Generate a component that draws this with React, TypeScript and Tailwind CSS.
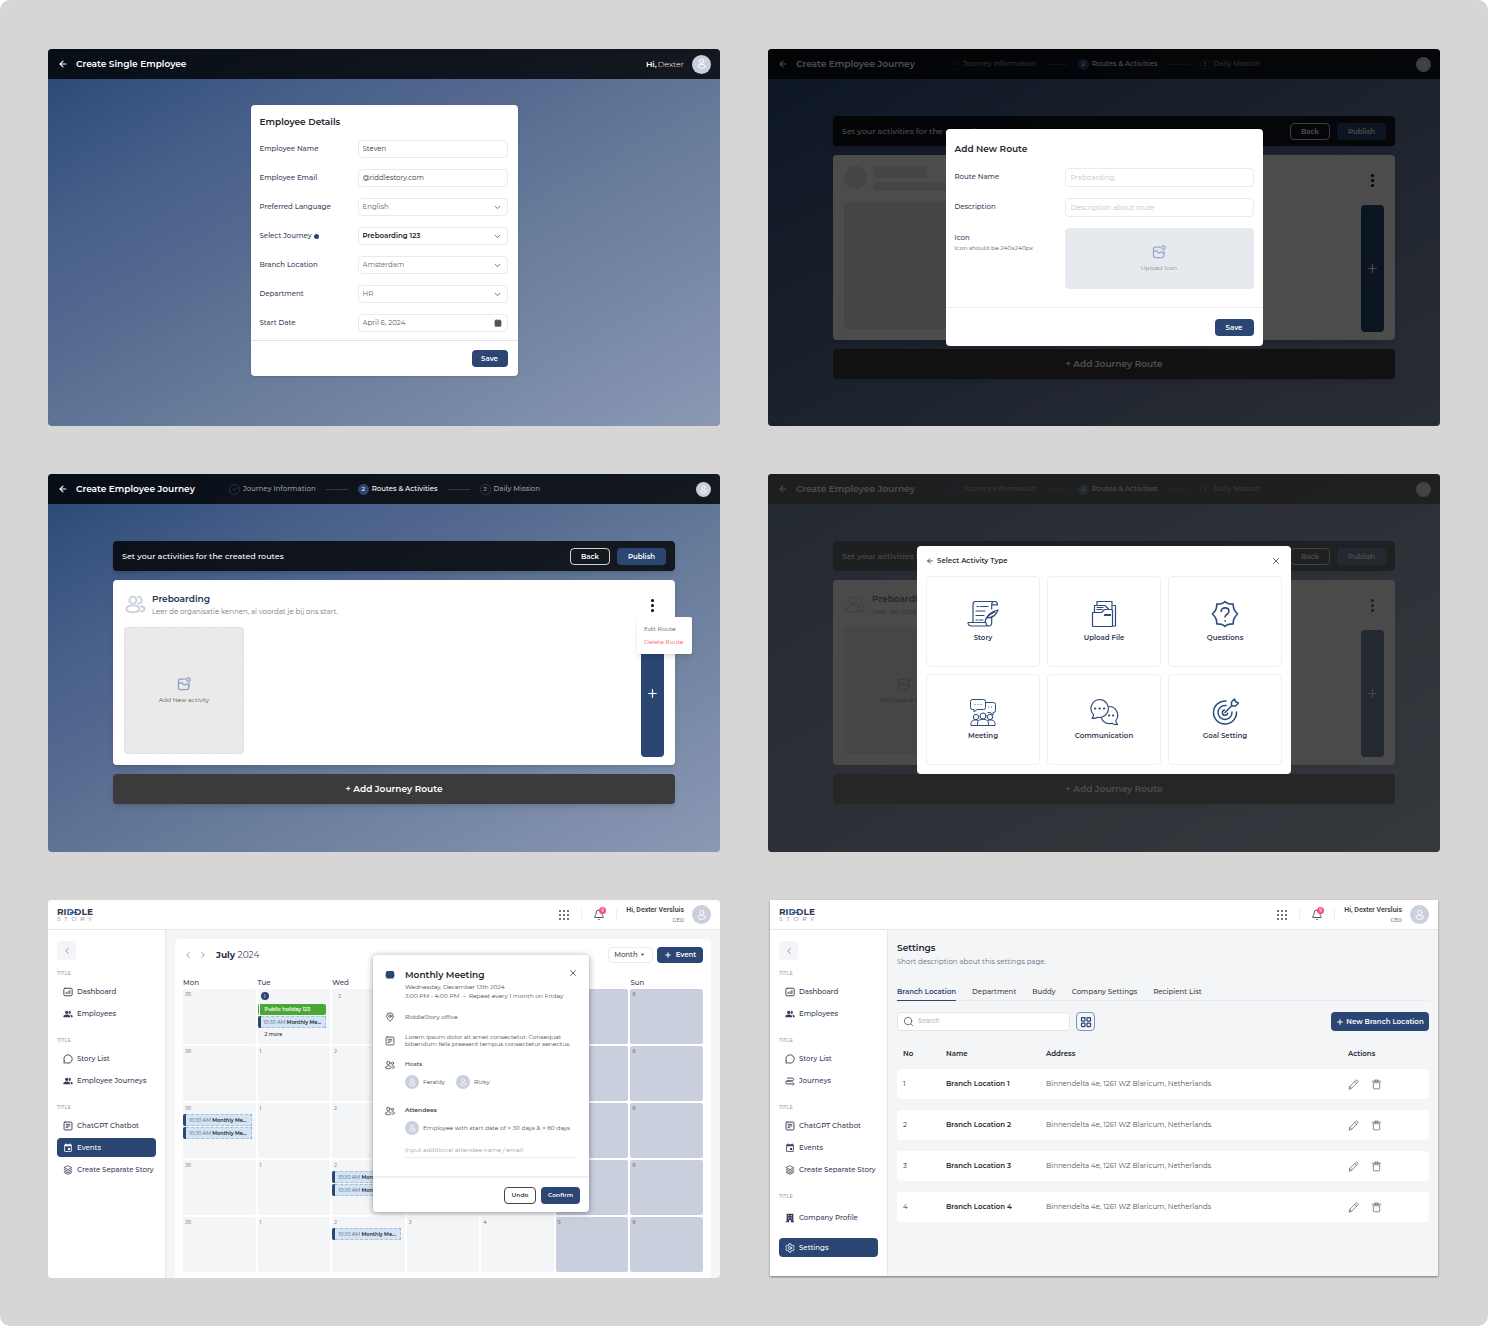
import React from "react";
import { ArrowLeft, Bell, Calendar, Check, ChevronDown, ChevronLeft, ChevronRight, LayoutGrid, MapPin, MessageCircle, Plus, Search, X } from "lucide-react";
import { MdPeopleAlt, MdEvent, MdArrowDropDown } from "react-icons/md";

type IconProps = { className?: string; strokeWidth?: number };

function Svg({ className, strokeWidth = 1.5, box = "0 0 24 24", children }: IconProps & { box?: string; children: React.ReactNode }) {
  return (
    <svg viewBox={box} className={className} fill="none" stroke="currentColor" strokeWidth={strokeWidth} strokeLinecap="round" strokeLinejoin="round" aria-hidden="true">
      {children}
    </svg>
  );
}

/* ---------- icons ---------- */

const UserIcon = (p: IconProps) => (
  <Svg {...p}>
    <circle cx="12" cy="7" r="4.5" />
    <ellipse cx="12" cy="17.5" rx="8" ry="4.2" />
  </Svg>
);

const UsersIcon = (p: IconProps) => (
  <Svg {...p}>
    <circle cx="9" cy="7" r="4" />
    <path d="M15 11a4 4 0 0 0 0-8" />
    <ellipse cx="9" cy="17" rx="7.5" ry="4" />
    <path d="M18.5 14c2 .4 3.8 1.5 3.8 3s-1.5 2.500-3.800 3" />
  </Svg>
);

const HostsIcon = (p: IconProps) => (
  <Svg {...p}>
    <circle cx="8" cy="7" r="4" />
    <circle cx="18" cy="8" r="2.6" />
    <path d="M1.500 18c0-3 3-4 6.500-4s6.500 1 6.500 4-2 3-6.500 3-6.500 0-6.500-3Z" />
    <path d="M17 14c3.500-.3 5.500 1 5.500 3s-1.500 2.500-4.500 2.500" />
  </Svg>
);

const ImageAddIcon = (p: IconProps) => (
  <Svg {...p}>
    <path d="M14 3.500H6A3.500 3.500 0 0 0 2.500 7v11A3.500 3.500 0 0 0 6 21.500h11a3.500 3.500 0 0 0 3.500-3.500v-8" />
    <circle cx="19.500" cy="4.500" r="3" />
    <path d="m3 12 2.500-2c1.200-1 2.500-.6 3.500.6l2 2.500c.7.900 1.800 1 2.600.2l1-1c1-1 2.400-.8 3.200.2l2.500 3" />
  </Svg>
);

const DashboardIcon = (p: IconProps) => (
  <Svg {...p}>
    <rect x="2" y="3" width="20" height="18" rx="3" />
    <path d="M7.500 16v-3M12 16v-5M16.500 16V8" />
  </Svg>
);

const NoteIcon = (p: IconProps) => (
  <Svg {...p}>
    <rect x="2.500" y="2.500" width="19" height="19" rx="2.500" />
    <path d="M7.500 8h9M7.500 12h9M7.500 16h4" />
  </Svg>
);

const StackIcon = (p: IconProps) => (
  <Svg {...p}>
    <path d="m12 2 9 4.500-9 4.500-9-4.500Z" />
    <path d="m3 10.500 9 4.500 9-4.500M3 14.500l9 4.500 9-4.500M3 18l9 4.500 9-4.500" />
  </Svg>
);

const RouteIcon = (p: IconProps) => (
  <Svg {...p}>
    <path d="M6 5h11a3 3 0 0 1 0 7H5a3 3 0 0 0 0 7h13M19 16l3 3-3 3M5 12h10" />
  </Svg>
);

const BuildingIcon = (p: IconProps) => (
  <svg viewBox="0 0 24 24" className={p.className} fill="currentColor" aria-hidden="true">
    <path fillRule="evenodd" d="M4 2h16v18h2v2h-8v-5h-4v5H2v-2h2V2Zm4 3v3h2V5H8Zm6 0v3h2V5h-2Zm-6 6v3h2v-3H8Zm6 0v3h2v-3h-2Z" />
  </svg>
);

const GearIcon = (p: IconProps) => (
  <Svg {...p}>
    <circle cx="12" cy="12" r="3.500" />
    <path d="M10 2h4l.8 3 2.400 1.400 3-.9 2 3.500-2.200 2.200v1.600l2.200 2.200-2 3.500-3-.9-2.400 1.400-.8 3h-4l-.8-3-2.400-1.400-3 .9-2-3.500L4 12.800v-1.600L1.800 9l2-3.500 3 .9L9.200 5Z" />
  </Svg>
);

const PencilIcon = (p: IconProps) => (
  <Svg {...p}>
    <path d="m2.500 21.500 1.500-5.500L17 3a2.500 2.500 0 0 1 3.500 0l.5.500a2.500 2.500 0 0 1 0 3.500L8 20ZM14.500 5.500l4 4M4 16l4 4" />
  </Svg>
);

const TrashIcon = (p: IconProps) => (
  <Svg {...p}>
    <path d="M2.500 5h19M9 2.500h6M5 9v10.500a2 2 0 0 0 2 2h10a2 2 0 0 0 2-2V9ZM9 5V2.500M15 5V2.500" />
  </Svg>
);

const StoryIcon = () => (
  <Svg box="0 0 32 28" className="h-7 w-8" strokeWidth={1.200}>
    <path d="M6 22V5c0-2 .6-3.500 2-3.500h20c2 0 2.500 1.200 2.500 3.300h-5.800M27 1.500c-1.500 0-2.300 1-2.300 3.300V9" />
    <path d="M1 22.500h18c0 2.500 1.200 3.500 3 3.500H4.500C2.200 26 1 24.800 1 22.500ZM22 26c2 0 2.700-1.400 2.700-3.500V17" />
    <path d="M10 6.500h1.500M13.500 6.500H21M9 11h9M9 15.500h8M9 20h2M12.500 20H16" />
    <path d="M18 22c1-5.500 4.500-10 13-12-1.500 4.500-5 8-11.500 8M18.500 19.500C21 16 24 13.500 28 12" />
  </Svg>
);

const FilesIcon = () => (
  <Svg box="0 0 26 28" className="h-7 w-[26px]" strokeWidth={1.200}>
    <path d="M6 5.500V1.500h15v7.500M3.500 12V5.500h10.500l3.500 3.500" />
    <path d="M1.500 26V12.500h9l3-3h7c.6 0 1 .4 1 1V26c0 .3-.2.500-.5.500H2c-.3 0-.5-.2-.5-.5Z" />
    <path d="M22 5.500h2.500V26H22M6 7.500h6M6 9.500h5" />
    <path d="M13.500 14.500h6M13.500 15.500h6" />
  </Svg>
);

const QuestionIcon = () => (
  <Svg box="0 0 28 28" className="size-7" strokeWidth={1.600}>
    <path d="M14 1.500c1.600 1.900 3.600 2.700 8.200 2.600 0 4.600.9 6.200 4.300 9.900-3.400 3.700-4.300 5.300-4.300 9.900-4.600-.1-6.600.7-8.200 2.600-1.600-1.900-3.600-2.700-8.200-2.600 0-4.600-.9-6.200-4.300-9.900 3.400-3.700 4.300-5.300 4.300-9.900 4.600.1 6.600-.7 8.200-2.600Z" />
    <path d="M10.200 11.500c0-5 7.800-4.700 7.800-.2 0 3-3.900 2.900-3.900 5.700M14.100 20.800v.3" />
  </Svg>
);

const MeetingIcon = () => (
  <Svg box="0 0 28 28" className="size-7" strokeWidth={1}>
    <path d="M3.500 1.500h11A2 2 0 0 1 16.500 3.500v6a2 2 0 0 1-2 2H8l-3 2.500v-2.500H3.500a2 2 0 0 1-2-2v-6a2 2 0 0 1 2-2Z" />
    <path d="M16.500 4.500h8a2 2 0 0 1 2 2v6a2 2 0 0 1-2 2H24v2.500l-3-2.500h-2M6 6.500h.1M9 6.500h.1M12 6.500h.1M19.500 9h.1M22.500 9h.1" />
    <circle cx="14" cy="18" r="3" />
    <circle cx="7" cy="19" r="2.700" />
    <circle cx="21" cy="19" r="2.700" />
    <path d="M8.500 27.500V25c0-5 11-5 11 0v2.500M8 27.500H2v-2c0-3 3-4.500 6.500-3M20 27.500h6v-2c0-3-3-4.500-6.500-3M8 27.500h12" />
  </Svg>
);

const ChatIcon = () => (
  <Svg box="0 0 30 28" className="h-7 w-[30px]" strokeWidth={1.200}>
    <path d="M10.500 1.500a9 9 0 1 1-2 17.800c-1.500 1-3.500 1.200-5.500 1 1-1 1.600-2.200 1.500-3.600A9 9 0 0 1 10.500 1.500Z" />
    <path d="M19.700 8.500a8.800 8.800 0 0 1 7.300 14c-.2 1.500.5 3 1.500 4-2 .2-4-.2-5.500-1.300-4.500 1.500-9.500-.7-10.800-5.500" />
    <path d="M6 10.500h.2M10.500 10.500h.2M15 10.500h.2M20 17.500h.2M24 17.500h.2" strokeWidth={2.200} />
  </Svg>
);

const GoalIcon = () => (
  <Svg box="0 0 28 28" className="size-7" strokeWidth={1.500}>
    <path d="M15 3A11.500 11.500 0 1 0 25.500 14M15 7.500a7 7 0 1 0 6 6.500M13.500 12a2.700 2.700 0 1 0 3.200 3.200" />
    <path d="m14 14.500 7-7M20.500 8V4l3-3 1.200 2.800L27.500 5l-3 3Z" />
  </Svg>
);

/* ---------- shared parts ---------- */

const primary = "bg-[#2b4673] text-white font-semibold leading-[9px] rounded-[4px] flex items-center justify-center";

function Avatar({ size }: { size: string }) {
  return (
    <span className={`flex shrink-0 items-center justify-center rounded-full bg-[#c9cfdd] text-white ${size}`}>
      <UserIcon className="size-3/5" strokeWidth={2} />
    </span>
  );
}

function Dots() {
  return (
    <span className="flex flex-col items-center gap-[2px]">
      <i className="size-[3px] rounded-full bg-black" />
      <i className="size-[3px] rounded-full bg-black" />
      <i className="size-[3px] rounded-full bg-black" />
    </span>
  );
}

function DarkHeader({ title, children }: { title: string; children: React.ReactNode }) {
  return (
    <header className="flex h-[30px] shrink-0 items-center bg-black/80 pr-[9px] pl-[10px] text-white">
      <button aria-label="Go back"><ArrowLeft className="size-[10px]" strokeWidth={2.600} /></button>
      <h2 className="ml-2 w-[153px] text-[9px] font-semibold whitespace-nowrap">{title}</h2>
      {children}
    </header>
  );
}

const gradient = "bg-[linear-gradient(to_bottom_right,#2a4673_0%,#2e4b78_5%,#47608a_25%,#566990_40%,#5f7495_50%,#8b99b4_100%)]";

/* ---------- create employee ---------- */

function Field({ id, label, info, children }: { id: string; label: string; info?: boolean; children: React.ReactNode }) {
  return (
    <div className="grid h-[18px] grid-cols-[98px_1fr] items-center">
      <label htmlFor={id} className="flex items-center gap-[2px] font-medium text-[#3a425c]">
        {label}
        {info && <i className="size-[5px] rounded-full bg-[#2b4673]" />}
      </label>
      <div className="relative h-full">{children}</div>
    </div>
  );
}

const control = "h-full w-full appearance-none rounded-[4px] border border-[#e8eaed] bg-white px-1 outline-none";

function SelectField({ id, label, value, tone, info }: { id: string; label: string; value: string; tone: string; info?: boolean }) {
  return (
    <Field id={id} label={label} info={info}>
      <select id={id} className={`${control} ${tone}`}>
        <option>{value}</option>
      </select>
      <ChevronDown className="pointer-events-none absolute top-[5px] right-[6px] size-[9px] text-[#444]" />
    </Field>
  );
}

function CreateEmployee() {
  return (
    <section className={`flex min-h-[377px] flex-col overflow-hidden rounded-[4px] ${gradient}`}>
      <DarkHeader title="Create Single Employee">
        <span className="ml-auto flex gap-px text-[8px] font-light"><b className="font-semibold">Hi,</b>Dexter</span>
        <span className="ml-2"><Avatar size="size-[19px]" /></span>
      </DarkHeader>
      <form className="mx-auto mt-[26px] w-[267px] rounded-[4px] bg-white text-[7px] shadow-sm" onSubmit={(e) => e.preventDefault()}>
        <div className="flex flex-col gap-[11px] pt-[11px] pr-[10px] pb-2 pl-[9px]">
          <h3 className="mb-[2px] h-[11px] text-[9px] leading-[11px] font-semibold text-[#23262f]">Employee Details</h3>
          <Field id="emp-name" label="Employee Name"><input id="emp-name" defaultValue="Steven" className={`${control} pb-px text-[#333]`} /></Field>
          <Field id="emp-mail" label="Employee Email"><input id="emp-mail" defaultValue="@riddlestory.com" className={`${control} pb-px text-[#333]`} /></Field>
          <SelectField id="emp-lang" label="Preferred Language" value="English" tone="text-[#666]" />
          <SelectField id="emp-journey" label="Select Journey" value="Preboarding 123" tone="font-semibold text-[#222]" info />
          <SelectField id="emp-branch" label="Branch Location" value="Amsterdam" tone="text-[#666]" />
          <SelectField id="emp-dept" label="Department" value="HR" tone="text-[#666]" />
          <Field id="emp-date" label="Start Date">
            <input id="emp-date" defaultValue="April 6, 2024" className={`${control} pb-px text-[#555]`} />
            <Calendar className="pointer-events-none absolute top-[5px] right-[6px] size-2 fill-current text-[#555]" />
          </Field>
        </div>
        <div className="flex justify-end border-t border-[#e0e3ea] px-[10px] py-[9px]">
          <button className={`${primary} h-[17px] w-9`}>Save</button>
        </div>
      </form>
    </section>
  );
}

/* ---------- journey builder ---------- */

function Step({ mark, label, state }: { mark: React.ReactNode; label: string; state: "done" | "on" | "next" }) {
  const ring = state === "on" ? "bg-[#2b4673] border-[#2b4673] text-white" : state === "done" ? "border-[#22365a] text-[#3f5f96]" : "border-[#34383f] text-[#9a9da3]";
  return (
    <span className={`flex items-center gap-[3px] text-[7px] font-medium whitespace-nowrap ${state === "on" ? "text-white" : "text-[#9a9da3]"}`}>
      <i className={`flex size-[11px] items-center justify-center rounded-full border text-[6px] not-italic ${ring}`}>{mark}</i>
      {label}
    </span>
  );
}

function JourneyScreen({ card, overlay, tall }: { card: React.ReactNode; overlay?: React.ReactNode; tall: string }) {
  return (
    <section className={`relative flex flex-col overflow-hidden rounded-[4px] ${tall} ${gradient}`}>
      <DarkHeader title="Create Employee Journey">
        <div className="flex items-center gap-[10px]">
          <Step mark={<Check className="size-[6px]" />} label="Journey Information" state="done" />
          <i className="h-px w-[22px] bg-[#34383f]" />
          <Step mark="2" label="Routes & Activities" state="on" />
          <i className="h-px w-[22px] bg-[#34383f]" />
          <Step mark="3" label="Daily Mission" state="next" />
        </div>
        <span className="ml-auto"><Avatar size="size-[15px]" /></span>
      </DarkHeader>
      <div className="mt-[37px] mr-[45px] ml-[65px] flex flex-col gap-[9px]">
        <div className="flex h-[30px] items-center rounded-[4px] bg-black/80 px-[9px] text-[8px] text-white shadow-md">
          <p className="font-medium">Set your activities for the created routes</p>
          <button className="ml-auto flex h-[17px] w-10 items-center justify-center rounded-[4px] border border-white/80 text-[7px] leading-[9px] font-semibold">Back</button>
          <button className={`${primary} ml-[7px] h-[17px] w-[49px] text-[7px]`}>Publish</button>
        </div>
        <div className="flex h-[185px] justify-between rounded-[4px] bg-white px-[11px] shadow-md">{card}</div>
        <button className="h-[30px] rounded-[4px] bg-[#3b3b3b] text-[9px] font-semibold text-white shadow-md">+ Add Journey Route</button>
      </div>
      {overlay}
    </section>
  );
}

function RouteRail({ menu }: { menu?: boolean }) {
  return (
    <div className="relative flex w-[23px] flex-col items-center pt-[19px]">
      <button aria-label="Route options" className="h-3"><Dots /></button>
      <button aria-label="Add activity" className={`${primary} mt-[19px] h-[127px] w-full`}><Plus className="size-[13px]" strokeWidth={2.200} /></button>
      {menu && (
        <div className="absolute top-[37px] -right-7 z-10 flex h-[37px] w-[55px] flex-col items-start justify-center gap-[5px] rounded-[2px] bg-white pl-[7px] text-[6px] leading-[8px] shadow-md">
          <button className="text-[#555]">Edit Route</button>
          <button className="text-[#ff4d57]">Delete Route</button>
        </div>
      )}
    </div>
  );
}

function PreboardingCard({ menu }: { menu?: boolean }) {
  return (
    <>
      <div className="pt-3">
        <div className="flex h-[34px] gap-[6px]">
          <UsersIcon className="mt-[2px] ml-[1px] size-[21px] text-[#c9cfdd]" strokeWidth={2.200} />
          <div>
            <h3 className="text-[9px] leading-[13px] font-semibold text-[#22355a]">Preboarding</h3>
            <p className="text-[7px] leading-[14px] text-[#777]">Leer de organisatie kennen, al voordat je bij ons start.</p>
          </div>
        </div>
        <button className="mt-px flex h-[127px] w-[120px] flex-col items-center justify-center gap-[5px] rounded-[4px] border border-dashed border-[#ddd] bg-[#eaeaea] text-[6px] leading-[8px] text-[#555]">
          <ImageAddIcon className="size-[14px] text-[#8fa0bf]" strokeWidth={2.200} />
          Add New activity
        </button>
      </div>
      <RouteRail menu={menu} />
    </>
  );
}

function SkeletonCard() {
  return (
    <>
      <div className="pt-[11px]">
        <div className="flex gap-[6px]">
          <i className="size-[23px] rounded-full bg-[#e6e6e6]" />
          <span className="flex flex-col gap-1">
            <i className="h-3 w-[54px] rounded-[4px] bg-[#e6e6e6]" />
            <i className="h-[9px] w-[120px] rounded-[4px] bg-[#e6e6e6]" />
          </span>
        </div>
        <div className="mt-[11px] h-[127px] w-[120px] rounded-[4px] bg-[#e6e6e6]" />
      </div>
      <RouteRail />
    </>
  );
}

function AddRouteModal() {
  const input = "h-[19px] w-full rounded-[4px] border border-[#e8eaed] px-[5px] pb-px placeholder:text-[#c4c4c4] outline-none";
  const label = "font-medium text-[#3a425c]";
  return (
    <div className="absolute inset-0 flex items-center justify-center bg-black/70">
      <form className="w-[317px] rounded-[4px] bg-white text-[7px]" onSubmit={(e) => e.preventDefault()}>
        <div className="px-[9px] pt-[13px] pb-[18px]">
          <h3 className="text-[9px] leading-[13px] font-semibold text-[#23262f]">Add New Route</h3>
          <div className="mt-[13px] grid grid-cols-[110px_1fr] items-center gap-y-[11px]">
            <label htmlFor="route-name" className={label}>Route Name</label>
            <input id="route-name" placeholder="Preboarding" className={input} />
            <label htmlFor="route-desc" className={label}>Description</label>
            <input id="route-desc" placeholder="Description about route" className={input} />
            <div className="self-start pt-1">
              <p className={`leading-[11px] ${label}`}>Icon</p>
              <p className="text-[6px] leading-[11px] text-[#555]">Icon should be 240x240px</p>
            </div>
            <button className="flex h-[61px] flex-col items-center justify-center gap-[5px] rounded-[4px] bg-[#e6e9ee] text-[6px] leading-[8px] text-[#888]">
              <ImageAddIcon className="size-[14px] text-[#9aaac8]" strokeWidth={2.200} />
              Upload Icon
            </button>
          </div>
        </div>
        <div className="flex justify-end border-t border-[#eceef1] px-[9px] pt-[11px] pb-[10px]">
          <button className={`${primary} h-[17px] w-[39px]`}>Save</button>
        </div>
      </form>
    </div>
  );
}

const activities = [
  { name: "Story", icon: <StoryIcon /> },
  { name: "Upload File", icon: <FilesIcon /> },
  { name: "Questions", icon: <QuestionIcon /> },
  { name: "Meeting", icon: <MeetingIcon /> },
  { name: "Communication", icon: <ChatIcon /> },
  { name: "Goal Setting", icon: <GoalIcon /> },
];

function ActivityModal() {
  return (
    <div className="absolute inset-0 flex items-center justify-center bg-[#222222]/[0.82] pb-[7px]">
      <div className="w-[374px] rounded-[4px] bg-white px-[9px] pb-[9px]">
        <div className="flex h-[30px] items-center text-[7px] leading-[9px] font-semibold text-[#333]">
          <button aria-label="Back to routes"><ArrowLeft className="size-2" strokeWidth={2.500} /></button>
          <h3 className="ml-[3px]">Select Activity Type</h3>
          <button aria-label="Close" className="mr-px ml-auto"><X className="size-[10px]" strokeWidth={1.800} /></button>
        </div>
        <div className="grid grid-cols-3 gap-[7px]">
          {activities.map((a) => (
            <button key={a.name} className="flex h-[91px] flex-col items-center justify-center gap-[5px] rounded-[4px] border border-[#eff0f2] text-[#2f4a7c]">
              {a.icon}
              <span className="text-[7px] leading-[10px] font-semibold text-[#333a55]">{a.name}</span>
            </button>
          ))}
        </div>
      </div>
    </div>
  );
}

/* ---------- admin shell ---------- */

function Logo() {
  return (
    <a href="#home" aria-label="Riddle Story" className="w-[35px] font-['Montserrat','Inter',sans-serif] text-[#333a4a]">
      <span className="relative flex justify-between text-[9px] leading-[8px] font-bold">
        <span>RI</span><span className="text-[#2f5aa8]">D</span><span className="text-[#2b4673]">D</span><span>LE</span>
        <i className="absolute top-1 left-[13px] h-px w-[7px] bg-[#2f5aa8]" />
      </span>
      <span className="flex justify-between text-[6px] leading-[6px] text-[#777]">
        <span>S</span><span>T</span><span>O</span><span>R</span><span>Y</span>
      </span>
    </a>
  );
}

function AppHeader() {
  return (
    <header className="flex h-[30px] shrink-0 items-center border-b border-[#e3e7ec] bg-white px-[9px] font-['Roboto',sans-serif]">
      <Logo />
      <button aria-label="Apps" className="ml-auto grid grid-cols-3 gap-[2px]">
        {Array.from({ length: 9 }, (_, i) => <i key={i} className="size-[2px] rounded-full bg-[#444]" />)}
      </button>
      <i className="ml-3 h-3 w-px bg-[#eceef1]" />
      <button aria-label="Notifications" className="relative ml-[11px] text-[#555]">
        <Bell className="size-3" strokeWidth={2} />
        <span className="absolute -top-[2px] -right-[1px] flex size-[7px] items-center justify-center rounded-full bg-[#fb4d7d] text-[5px] leading-[6px] text-white">9</span>
      </button>
      <i className="ml-[11px] h-3 w-px bg-[#eceef1]" />
      <span className="ml-[9px] text-right text-[#444]">
        <b className="block text-[7px] leading-[10px] font-semibold">Hi, Dexter Versluis</b>
        <small className="block text-[6px] leading-[10px] text-[#777]">CEO</small>
      </span>
      <span className="ml-2"><Avatar size="size-[19px]" /></span>
    </header>
  );
}

type NavItem = { name: string; icon: React.ReactNode };
const ic = "size-[10px] shrink-0";
const groupOne: NavItem[] = [
  { name: "Dashboard", icon: <DashboardIcon className={ic} strokeWidth={2.200} /> },
  { name: "Employees", icon: <MdPeopleAlt className={ic} /> },
];
const storyList: NavItem = { name: "Story List", icon: <MessageCircle className={ic} strokeWidth={2.200} /> };
const groupThree: NavItem[] = [
  { name: "ChatGPT Chatbot", icon: <NoteIcon className={ic} strokeWidth={2.200} /> },
  { name: "Events", icon: <MdEvent className={ic} /> },
  { name: "Create Separate Story", icon: <StackIcon className={ic} strokeWidth={1.800} /> },
];

function NavLink({ item, active }: { item: NavItem; active?: boolean }) {
  return (
    <a href="#nav" className={`flex h-[19px] items-center gap-1 rounded-[4px] pl-[6px] text-[7px] leading-[9px] font-medium whitespace-nowrap ${active ? "bg-[#2b4673] text-white" : "text-[#353c55]"}`}>
      {item.icon}
      {item.name}
    </a>
  );
}

function Sidebar({ groups, active, children }: { groups: NavItem[][]; active: string; children?: React.ReactNode }) {
  return (
    <aside className="w-[118px] shrink-0 border-r border-[#e6eaef] bg-white px-[9px] pt-[11px]">
      <button aria-label="Collapse sidebar" className="flex size-[19px] items-center justify-center rounded-[4px] bg-[#f3f5f7] text-[#6f83a8]"><ChevronLeft className="size-[10px]" /></button>
      <nav className="mt-2 flex flex-col gap-3">
        {groups.map((g, i) => (
          <div key={i} className="flex flex-col gap-[3px]">
            <h4 className="mb-[1px] text-[5px] leading-[10px] font-medium text-[#8d9dbb]">TITLE</h4>
            {g.map((item) => <NavLink key={item.name} item={item} active={item.name === active} />)}
          </div>
        ))}
      </nav>
      {children}
    </aside>
  );
}

/* ---------- calendar ---------- */

function CalEvent() {
  return (
    <div className="mr-1 flex h-3 items-stretch overflow-hidden rounded-[2px] bg-[#2b4673] pl-[3px] text-[5px] leading-[10px] whitespace-nowrap text-[#4a5468]">
      <span className="flex-1 truncate rounded-r-[2px] border border-l-0 border-dashed border-[#a9c1da] bg-[#d3e5f4] pl-[3px]">10:30 AM <b className="font-semibold text-[#222]">Monthly Me...</b></span>
    </div>
  );
}

function CalendarGrid() {
  const days = ["Mon", "Tue", "Wed", "Thu", "Fri", "Sat", "Sun"];
  const dates = ["30", "1", "2", "3", "4", "5", "6"];
  const eventCount: Record<string, number> = { "2-0": 2, "3-2": 2, "4-2": 1 };
  return (
    <div>
      <div className="grid grid-cols-7 gap-x-[2px] text-[7px] leading-[10px] font-medium text-[#3a425c]">
        {days.map((d) => <span key={d}>{d}</span>)}
      </div>
      <div className="mt-px grid grid-cols-7 gap-[2px] text-[5px] leading-[7px] text-[#4a5468]">
        {[0, 1, 2, 3, 4].map((r) =>
          dates.map((d, c) => (
            <div key={`${r}-${c}`} className={`h-[55px] min-w-0 rounded-[2px] pt-[2px] ${c > 4 ? "bg-[#c9cfdd]" : "bg-[#f3f5f7]"}`}>
              {r === 0 && c === 1 ? (
                <>
                  <span className="mt-px ml-[3px] flex size-2 items-center justify-center rounded-full bg-[#2b4673] text-white">1</span>
                  <div className="mt-1 mr-1 mb-[1px] flex h-[11px] items-center rounded-[2px] border-l border-[#4ba733] bg-[#4ba733] text-[5px] font-semibold whitespace-nowrap text-white">
                    <i className="h-full w-px bg-white" />
                    <span className="pl-[5px]">Public holiday 123</span>
                  </div>
                  <CalEvent />
                  <p className="pt-[3px] pl-[7px] font-medium text-[#222]">2 more</p>
                </>
              ) : (
                <span className={`block ${r === 0 && c === 2 ? "pt-[2px] pl-[6px]" : "pl-[2px]"}`}>{d}</span>
              )}
              <div className="mt-[2px] flex flex-col gap-[1px]">
                {Array.from({ length: eventCount[`${r}-${c}`] ?? 0 }, (_, i) => <CalEvent key={i} />)}
              </div>
            </div>
          )),
        )}
      </div>
    </div>
  );
}

function Person({ name }: { name: string }) {
  return <span className="flex items-center gap-1 text-[6px]"><Avatar size="size-[14px]" />{name}</span>;
}

function MeetingPopover() {
  const row = "grid grid-cols-[20px_1fr]";
  return (
    <div className="absolute top-4 left-[198px] flex h-[257px] w-[216px] flex-col rounded-[4px] bg-white text-[6px] leading-[8px] text-[#444] shadow-[0_1px_6px_rgba(0,0,0,0.4)]">
      <div className="flex-1 px-3 pt-[13px]">
        <div className={row}>
          <svg viewBox="0 0 10 8" className="mt-[3px] h-2 w-[10px] fill-[#2b4673]" aria-hidden="true"><path d="M2 0h6l1 1 .6 4.500-1 .5v1.500h-7.200V6L.4 5.500 1 1Z" /></svg>
          <div>
            <div className="flex h-[15px] justify-between">
              <h3 className="text-[9px] leading-[14px] font-semibold text-[#23262f]">Monthly Meeting</h3>
              <button aria-label="Close" className="-mr-px size-[10px]"><X className="size-[10px] text-[#555]" strokeWidth={2} /></button>
            </div>
            <p className="leading-[9px]">Wednesday, December 13th 2024</p>
            <p className="leading-[9px]">3:00 PM - 4:00 PM &nbsp;–&nbsp; Repeat every 1 month on Friday</p>
          </div>
        </div>
        <div className={`${row} mt-[11px] items-center`}><MapPin className="size-[10px]" strokeWidth={2} /><p>RiddleStory office</p></div>
        <div className={`${row} mt-3 items-center`}><NoteIcon className="size-[10px]" strokeWidth={2} /><p className="leading-[7px] whitespace-nowrap">Lorem ipsum dolor sit amet consectetur. Consequat<br />bibendum felis praesent tempus consectetur senectus.</p></div>
        <div className={`${row} mt-3`}>
          <HostsIcon className="size-[10px]" strokeWidth={2} />
          <div><p className="font-medium">Hosts</p><div className="mt-[7px] flex gap-[11px]"><Person name="Feraldy" /><Person name="Rizky" /></div></div>
        </div>
        <div className={`${row} mt-[17px]`}>
          <HostsIcon className="size-[10px]" strokeWidth={2} />
          <div>
            <p className="font-semibold">Attendees</p>
            <div className="mt-[7px]"><Person name="Employee with start date of > 30 days & < 60 days" /></div>
            <input aria-label="Additional attendee" placeholder="Input additional attendee name / email" className="mt-2 h-[15px] w-full border-b border-[#eceef1] outline-none placeholder:text-[#999]" />
          </div>
        </div>
      </div>
      <div className="flex h-9 items-center justify-end gap-[5px] border-t-2 border-[#eff0f2] pr-[9px]">
        <button className="h-[17px] w-8 rounded-[4px] border border-[#444] font-semibold text-[#333]">Undo</button>
        <button className={`${primary} h-[17px] w-[39px]`}>Confirm</button>
      </div>
    </div>
  );
}

function CalendarScreen() {
  return (
    <section className="flex min-h-[378px] flex-col overflow-hidden rounded-[4px] bg-[#f3f5f7]">
      <AppHeader />
      <div className="flex flex-1">
        <Sidebar groups={[groupOne, [storyList, { name: "Employee Journeys", icon: <MdPeopleAlt className={ic} /> }], groupThree]} active="Events" />
        <main className="relative mx-[9px] mt-[9px] flex-1 rounded-[4px] bg-white px-2">
          <div className="flex h-[31px] items-center">
            <button aria-label="Previous month"><ChevronLeft className="size-[10px] text-[#6f83a8]" /></button>
            <button aria-label="Next month" className="ml-[5px]"><ChevronRight className="size-[10px] text-[#6f83a8]" /></button>
            <h2 className="ml-2 text-[9px] text-[#444b60]"><b className="font-bold text-[#2c3350]">July</b> 2024</h2>
            <button className="ml-auto flex h-4 w-[45px] items-center justify-center rounded-[4px] border border-[#e8eaed] text-[7px] leading-[9px] font-medium text-[#444]">Month <MdArrowDropDown className="size-[9px]" /></button>
            <button className={`${primary} ml-1 h-4 w-[46px] gap-1 text-[7px]`}><Plus className="size-2" strokeWidth={3} />Event</button>
          </div>
          <div className="mt-2"><CalendarGrid /></div>
          <MeetingPopover />
        </main>
      </div>
    </section>
  );
}

/* ---------- settings ---------- */

function SettingsScreen() {
  const tabs = ["Department", "Buddy", "Company Settings", "Recipient List"];
  return (
    <section className="mx-[2px] mb-[2px] flex min-h-[376px] flex-col bg-[#f3f5f7] shadow-[0_1px_2px_rgba(0,0,0,0.45)]">
      <AppHeader />
      <div className="flex flex-1">
        <Sidebar groups={[groupOne, [storyList, { name: "Journeys", icon: <RouteIcon className={ic} strokeWidth={2.200} /> }], groupThree]} active="">
          <h4 className="mt-3 text-[5px] leading-[10px] font-medium text-[#8d9dbb]">TITLE</h4>
          <div className="mt-[7px] flex flex-col gap-[11px]">
            <NavLink item={{ name: "Company Profile", icon: <BuildingIcon className={ic} /> }} />
            <NavLink item={{ name: "Settings", icon: <GearIcon className={ic} strokeWidth={2} /> }} active />
          </div>
        </Sidebar>
        <main className="flex-1 px-[9px] pt-[11px] text-[7px]">
          <h2 className="text-[9px] leading-[14px] font-semibold text-[#23262f]">Settings</h2>
          <p className="leading-[14px] text-[#666f7f]">Short description about this settings page.</p>
          <div role="tablist" className="mt-4 flex h-4 gap-4 border-b border-[#e8ebef] font-medium text-[#444]">
            <button role="tab" aria-selected="true" className="-mb-px h-4 border-b border-[#2b4673] font-semibold text-[#2b4673]">Branch Location</button>
            {tabs.map((t) => <button role="tab" aria-selected="false" key={t}>{t}</button>)}
          </div>
          <div className="mt-[11px] flex items-center">
            <label className="flex h-[19px] w-[173px] items-center gap-1 rounded-[4px] border border-[#dfe3ea] bg-white px-[5px] font-['Roboto',sans-serif]">
              <Search className="size-[11px] shrink-0 text-[#555]" strokeWidth={1.800} />
              <input aria-label="Search" placeholder="Search" className="w-full outline-none placeholder:text-[#bbb]" />
            </label>
            <button aria-label="Grid view" className="ml-[6px] flex size-[19px] items-center justify-center rounded-[4px] border border-[#7f93b8] text-[#2b4673]"><LayoutGrid className="size-3" strokeWidth={2.500} /></button>
            <button className={`${primary} ml-auto h-[19px] w-[98px] gap-[2px]`}><Plus className="size-2" strokeWidth={3} />New Branch Location</button>
          </div>
          <table className="mt-2 w-full table-fixed border-separate border-spacing-x-0 border-spacing-y-[11px] text-left text-[#555]">
            <thead className="text-[#23262f]">
              <tr className="h-2 leading-[8px]">
                <th className="w-[49px] pl-[6px] font-semibold">No</th>
                <th className="w-[100px] font-semibold">Name</th>
                <th className="font-semibold">Address</th>
                <th className="w-[81px] font-semibold">Actions</th>
              </tr>
            </thead>
            <tbody>
              {[1, 2, 3, 4].map((n) => (
                <tr key={n} className="h-[30px] bg-white">
                  <td className="rounded-l-[4px] pl-[6px] text-[#333]">{n}</td>
                  <td className="font-semibold text-[#23262f]">Branch Location {n}</td>
                  <td>Binnendelta 4e, 1261 WZ Blaricum, Netherlands</td>
                  <td className="rounded-r-[4px]">
                    <span className="flex gap-3">
                      <button aria-label="Edit"><PencilIcon className="size-[11px]" /></button>
                      <button aria-label="Delete"><TrashIcon className="size-[11px]" /></button>
                    </span>
                  </td>
                </tr>
              ))}
            </tbody>
          </table>
        </main>
      </div>
    </section>
  );
}

export default function App() {
  return (
    <div className="grid min-h-screen grid-cols-2 gap-12 rounded-[10px] bg-[#d6d6d6] px-12 pt-[49px] pb-12 font-['Montserrat','Inter',sans-serif]">
      <CreateEmployee />
      <JourneyScreen tall="min-h-[377px]" card={<SkeletonCard />} overlay={<AddRouteModal />} />
      <JourneyScreen tall="min-h-[378px]" card={<PreboardingCard menu />} />
      <JourneyScreen tall="min-h-[378px]" card={<PreboardingCard />} overlay={<ActivityModal />} />
      <CalendarScreen />
      <SettingsScreen />
    </div>
  );
}
